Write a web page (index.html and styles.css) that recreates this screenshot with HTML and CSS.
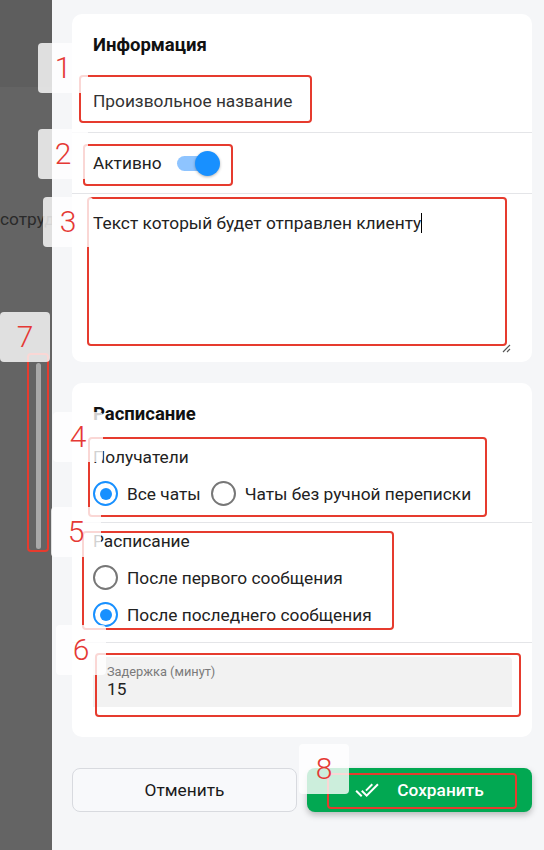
FILE: index.html
```html
<!DOCTYPE html>
<html lang="ru">
<head>
    <meta charset="UTF-8">
    <meta name="viewport" content="width=device-width, initial-scale=1.0">
    <title>Рассылка</title>
    <link rel="stylesheet" href="styles.css">
</head>
<body>
    <div class="layout">
        <aside class="sidebar">
            <div class="sidebar-head"></div>
            <div class="sidebar-item">сотрудники</div>
            <div class="scroll-thumb"></div>
        </aside>

        <main class="content">
            <section class="card">
                <h2 class="card-title">Информация</h2>
                <div class="row row-name">Произвольное название</div>
                <div class="row row-active">
                    <span>Активно</span>
                    <span class="switch"><span class="switch-track"></span><span class="switch-knob"></span></span>
                </div>
                <div class="row-text">
                    <div class="message">Текст который будет отправлен клиенту<span class="caret"></span>
                        <svg class="grip" width="10" height="10" viewBox="0 0 10 10">
                            <path d="M9 2 L2 9 M9 6 L6 9" stroke="#555" stroke-width="1.2" fill="none"/>
                        </svg>
                    </div>
                </div>
            </section>

            <section class="card">
                <h2 class="card-title">Расписание</h2>
                <div class="group group-first">
                    <div class="group-label">Получатели</div>
                    <div class="radio-line">
                        <span class="radio checked"></span><span class="radio-text">Все чаты</span>
                        <span class="radio"></span><span class="radio-text">Чаты без ручной переписки</span>
                    </div>
                </div>
                <div class="group group-second">
                    <div class="group-label">Расписание</div>
                    <div class="radio-line">
                        <span class="radio"></span><span class="radio-text">После первого сообщения</span>
                    </div>
                    <div class="radio-line radio-line-next">
                        <span class="radio checked"></span><span class="radio-text">После последнего сообщения</span>
                    </div>
                </div>
                <div class="group group-last">
                    <div class="field">
                        <div class="field-label">Задержка (минут)</div>
                        <div class="field-value">15</div>
                    </div>
                </div>
            </section>

            <div class="actions">
                <button class="btn btn-cancel">Отменить</button>
                <button class="btn btn-save">
                    <svg width="24" height="24" viewBox="0 0 24 24">
                        <path fill="#fff" d="M18 7l-1.41-1.41-6.34 6.34 1.41 1.41L18 7zm4.24-1.41L11.66 16.17 7.48 12l-1.41 1.41L11.66 19l12-12-1.42-1.41zM.41 13.41L6 19l1.41-1.41L1.83 12 .41 13.41z"/>
                    </svg>
                    <span>Сохранить</span>
                </button>
            </div>
        </main>
    </div>

    <!-- пометки поверх скриншота -->
    <div class="frame f1"></div>
    <div class="frame f2"></div>
    <div class="frame f3"></div>
    <div class="frame f4"></div>
    <div class="frame f5"></div>
    <div class="frame f6"></div>
    <div class="frame f7"></div>
    <div class="frame f8"></div>

    <div class="num n1">1</div>
    <div class="num n2">2</div>
    <div class="num n3">3</div>
    <div class="num n4">4</div>
    <div class="num n5">5</div>
    <div class="num n6">6</div>
    <div class="num n7">7</div>
    <div class="num n8">8</div>
</body>
</html>
```

FILE: styles.css
```css
body {
    margin: 0;
    padding: 0;
    font-family: Roboto, "Liberation Sans", sans-serif;
    font-size: 17.3px;
    color: #222;
    background-color: #f5f6f8;
}
.layout {
    display: flex;
    min-height: 850px;
}
.sidebar {
    width: 52px;
    flex-shrink: 0;
    background-color: #646464;
    overflow: hidden;
}
.sidebar-head {
    height: 87px;
    background-color: #5e5e5e;
}
.sidebar-item {
    margin-top: 122px;
    line-height: 20px;
    white-space: nowrap;
    color: #2a2a2a;
}
.scroll-thumb {
    margin: 134px 0 0 36px;
    width: 5px;
    height: 186px;
    border-radius: 3px;
    background-color: #a9a9a9;
}
.content {
    flex: 1;
    padding: 14px 12px 0 20px;
}
.card {
    background-color: white;
    border-radius: 10px;
    margin-bottom: 21px;
}
.card-title {
    margin: 0;
    padding: 21px 21px 0;
    font-size: 18.5px;
    font-weight: bold;
    line-height: 20px;
    color: #111;
}
.row {
    padding: 0 21px;
    border-bottom: 1px solid #e4e5e8;
    line-height: 20px;
}
.row-name {
    padding-top: 36px;
    padding-bottom: 21px;
    color: #333;
}
.row-active {
    display: flex;
    align-items: center;
    height: 60px;
}
.switch {
    position: relative;
    width: 43px;
    height: 25px;
    margin-left: 15px;
}
.switch-track {
    position: absolute;
    left: 0;
    top: 5px;
    width: 38px;
    height: 15px;
    border-radius: 8px;
    background-color: #8ec4ff;
}
.switch-knob {
    position: absolute;
    right: 0;
    top: 0;
    width: 25px;
    height: 25px;
    border-radius: 50%;
    background-color: #1890ff;
    box-shadow: 0 1px 3px rgba(0, 0, 0, 0.3);
}
.row-text {
    padding: 19px 21px 9px;
}
.message {
    position: relative;
    height: 140px;
    line-height: 20px;
    color: #222;
}
.caret {
    display: inline-block;
    width: 1px;
    height: 20px;
    vertical-align: top;
    background-color: #000;
}
.grip {
    position: absolute;
    right: 0;
    bottom: 0;
}
.group {
    padding: 0 20px 0 21px;
    border-bottom: 1px solid #e4e5e8;
}
.group-first {
    padding-top: 23px;
    padding-bottom: 16px;
}
.group-second {
    padding-top: 8px;
    padding-bottom: 15px;
}
.group-last {
    padding-top: 14px;
    padding-bottom: 30px;
    border-bottom: none;
}
.group-label {
    line-height: 20px;
    color: #222;
}
.radio-line {
    display: flex;
    align-items: center;
    margin-top: 14px;
    height: 25px;
}
.radio-line-next {
    margin-top: 12px;
}
.radio {
    width: 21px;
    height: 21px;
    border: 2px solid #777;
    border-radius: 50%;
    flex-shrink: 0;
    position: relative;
}
.radio.checked {
    border-color: #1890ff;
}
.radio.checked::after {
    content: "";
    position: absolute;
    left: 4.5px;
    top: 4.5px;
    width: 12px;
    height: 12px;
    border-radius: 50%;
    background-color: #1890ff;
}
.radio-text {
    margin: 0 10px 0 9px;
    color: #222;
}
.field {
    background-color: #f2f2f2;
    border-radius: 4px 4px 0 0;
    padding: 8px 14px;
}
.field-label {
    font-size: 12.8px;
    line-height: 14px;
    color: #7a7a7a;
}
.field-value {
    line-height: 20px;
    color: #222;
}
.actions {
    display: grid;
    grid-template-columns: 1fr 1fr;
    gap: 10px;
    margin-top: 31px;
}
.btn {
    height: 44px;
    border-radius: 8px;
    font-family: Roboto, "Liberation Sans", sans-serif;
    font-size: 17.3px;
    cursor: pointer;
    display: flex;
    align-items: center;
    justify-content: center;
}
.btn-cancel {
    background-color: #f8f9fb;
    border: 1px solid #d8dadf;
    color: #1a1a1a;
}
.btn-save {
    background-color: #02a852;
    border: none;
    color: white;
    font-weight: 500;
    gap: 18px;
    box-shadow: 0 3px 6px rgba(0, 0, 0, 0.25);
}
.frame {
    position: absolute;
    border: 2px solid #e63b2e;
    border-radius: 4px;
    box-sizing: border-box;
}
.f1 { left: 79px; top: 75px; width: 233px; height: 48px; }
.f2 { left: 83px; top: 144px; width: 150px; height: 42px; }
.f3 { left: 87px; top: 197px; width: 420px; height: 149px; }
.f4 { left: 88px; top: 437px; width: 399px; height: 80px; }
.f5 { left: 82px; top: 531px; width: 312px; height: 99px; }
.f6 { left: 95px; top: 653px; width: 426px; height: 64px; }
.f7 { left: 27px; top: 353px; width: 22px; height: 199px; }
.f8 { left: 327px; top: 773px; width: 190px; height: 36px; }
.num {
    position: absolute;
    width: 50px;
    height: 50px;
    border-radius: 4px;
    background-color: rgba(255, 255, 255, 0.8);
    color: #e53935;
    font-family: Roboto, sans-serif;
    font-size: 30px;
    font-weight: 300;
    line-height: 50px;
    text-align: center;
}
.n1 { left: 38px; top: 43px; }
.n2 { left: 38px; top: 129px; }
.n3 { left: 43px; top: 197px; }
.n4 { left: 53px; top: 412px; }
.n5 { left: 51px; top: 507px; }
.n6 { left: 56px; top: 625px; }
.n7 { left: 0; top: 312px; }
.n8 { left: 299px; top: 744px; }
```
